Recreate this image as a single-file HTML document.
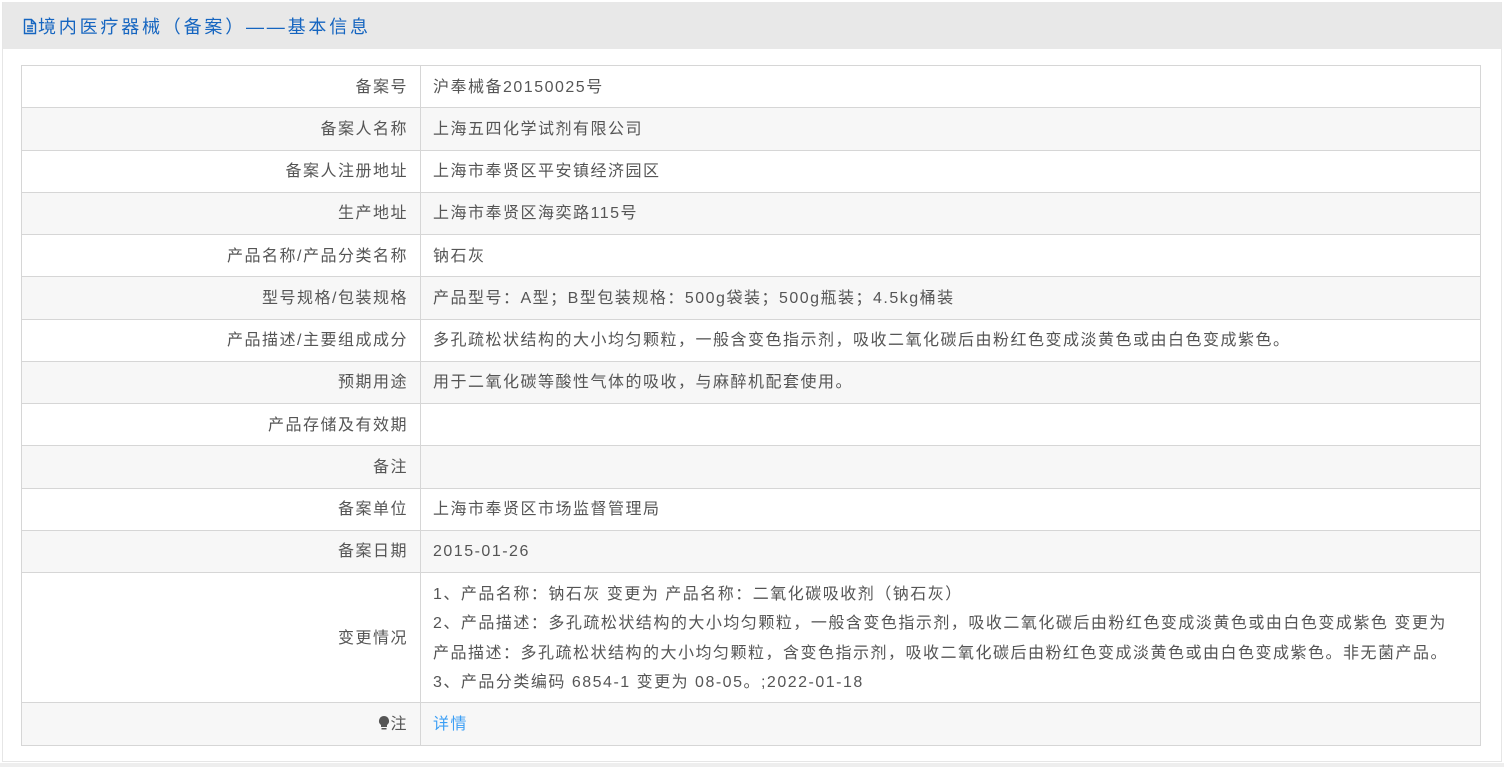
<!DOCTYPE html>
<html><head><meta charset="utf-8"><style>
body{margin:0;background:#fff;font-family:"Liberation Sans","Noto Sans CJK SC",sans-serif;width:1504px;height:767px;overflow:hidden;position:relative}
.panel{position:absolute;left:2px;top:2px;width:1498px;height:759px;border:1px solid #e6e6e6;border-top:none;background:#fff}
.hd{height:47px;background:#e8e8e8;color:#1565c0;font-size:18px;letter-spacing:2.8px;line-height:51px;padding-left:20px}
.bot{position:absolute;left:0;top:763px;width:1504px;height:4px;background:#eee}
table{position:absolute;left:21px;top:65px;width:1460px;border-collapse:collapse;font-size:16px;color:#555;letter-spacing:1.5px}
td{border:1px solid #d6d6d6;height:39.25px;padding:2px 12px 0;line-height:30px;white-space:nowrap}
td.l{width:374px;text-align:right;padding-right:12px}
tr:nth-child(even) td{background:#f7f7f7}
a{color:#3c9ff5;text-decoration:none}
</style></head><body>
<div class="panel"><div class="hd"><svg width="14" height="17" viewBox="0 0 14 17" style="vertical-align:-2px;margin-right:1px"><path d="M1.5 1.5h7l4 4v10h-11z M8.5 1.5v4h4 M4 8h6 M4 10.5h6 M4 13h6" fill="none" stroke="#1565c0" stroke-width="1.4"/></svg>境内医疗器械（备案）——基本信息</div></div>
<table>
<tr><td class="l">备案号</td><td>沪奉械备20150025号</td></tr>
<tr><td class="l">备案人名称</td><td>上海五四化学试剂有限公司</td></tr>
<tr><td class="l">备案人注册地址</td><td>上海市奉贤区平安镇经济园区</td></tr>
<tr><td class="l">生产地址</td><td>上海市奉贤区海奕路115号</td></tr>
<tr><td class="l">产品名称/产品分类名称</td><td>钠石灰</td></tr>
<tr><td class="l">型号规格/包装规格</td><td>产品型号：A型；B型包装规格：500g袋装；500g瓶装；4.5kg桶装</td></tr>
<tr><td class="l">产品描述/主要组成成分</td><td>多孔疏松状结构的大小均匀颗粒，一般含变色指示剂，吸收二氧化碳后由粉红色变成淡黄色或由白色变成紫色。</td></tr>
<tr><td class="l">预期用途</td><td>用于二氧化碳等酸性气体的吸收，与麻醉机配套使用。</td></tr>
<tr><td class="l">产品存储及有效期</td><td></td></tr>
<tr><td class="l">备注</td><td></td></tr>
<tr><td class="l">备案单位</td><td>上海市奉贤区市场监督管理局</td></tr>
<tr><td class="l">备案日期</td><td>2015-01-26</td></tr>
<tr><td class="l" style="height:127px">变更情况</td><td style="line-height:29.5px">1、产品名称：钠石灰 变更为 产品名称：二氧化碳吸收剂（钠石灰）<br>2、产品描述：多孔疏松状结构的大小均匀颗粒，一般含变色指示剂，吸收二氧化碳后由粉红色变成淡黄色或由白色变成紫色 变更为<br>产品描述：多孔疏松状结构的大小均匀颗粒，含变色指示剂，吸收二氧化碳后由粉红色变成淡黄色或由白色变成紫色。非无菌产品。<br>3、产品分类编码 6854-1 变更为 08-05。;2022-01-18</td></tr>
<tr><td class="l" style="height:40px"><svg width="12" height="16" viewBox="0 0 12 16" style="vertical-align:-2px"><path d="M6 1a5 5 0 0 0-3 9v2h6v-2a5 5 0 0 0-3-9z M3.5 13h5v1.5h-5z" fill="#555"/></svg>注</td><td><a>详情</a></td></tr>
</table>
<div class="bot"></div>
</body></html>
